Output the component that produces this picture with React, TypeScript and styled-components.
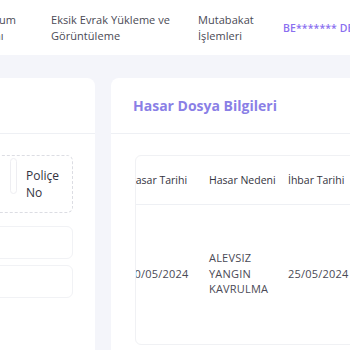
import React from "react";
import styled, { createGlobalStyle } from "styled-components";

const Global = createGlobalStyle`
  html, body { margin: 0; padding: 0; background: #f4f5fa; }
  body { font-family: "Open Sans", "Noto Sans", sans-serif; overflow: hidden; width: 350px; height: 350px; }
`;

const Page = styled.div`
  width: 350px;
  height: 350px;
  overflow: hidden;
  background: #f4f5fa;
`;

const TopBar = styled.header`
  height: 55px;
  background: #ffffff;
  display: flex;
  align-items: center;
  margin-left: -55px;
  white-space: nowrap;
`;

const NavItem = styled.div<{ $w: number; $active?: boolean }>`
  flex: 0 0 ${(p) => p.$w}px;
  font-size: ${(p) => (p.$active ? "10.5px" : "11px")};
  line-height: 16px;
  font-weight: ${(p) => (p.$active ? 600 : 400)};
  color: ${(p) => (p.$active ? "#8a6ff0" : "#4a4a55")};
  letter-spacing: ${(p) => (p.$active ? "0.1px" : "0.05px")};
`;

const Content = styled.div`
  display: flex;
  gap: 16px;
  padding-top: 23px;
  margin-left: -120px;
`;

const Card = styled.section<{ $w: number }>`
  flex: 0 0 ${(p) => p.$w}px;
  height: 300px;
  background: #ffffff;
  border-radius: 8px;
  display: flex;
  flex-direction: column;
`;

const CardHead = styled.div`
  height: 56px;
  border-bottom: 1px solid #eef0f4;
  display: flex;
  align-items: center;
  padding-left: 22px;
  box-sizing: border-box;
`;

const Title = styled.h2`
  margin: 0;
  font-size: 14px;
  font-weight: 700;
  color: #8a7fe6;
  letter-spacing: 0;
`;

const LeftBody = styled.div`
  padding: 21px 22px 0 96px;
  display: flex;
  flex-direction: column;
  gap: 13px;
`;

const DashedBox = styled.div`
  height: 58px;
  border: 1px dashed #dcdde3;
  border-radius: 6px;
  display: flex;
  align-items: center;
  padding-left: 33px;
  gap: 9px;
  box-sizing: border-box;
`;

const Handle = styled.div`
  width: 7px;
  height: 36px;
  border: 1px solid #eeeef2;
  border-radius: 4px;
  align-self: flex-start;
  margin-top: 2px;
  box-sizing: border-box;
`;

const HeadLabel = styled.div`
  font-size: 12px;
  line-height: 17px;
  color: #333340;
  font-weight: 500;
`;

const Inputs = styled.div`
  display: flex;
  flex-direction: column;
  gap: 6px;
`;

const InputBox = styled.div`
  height: 33px;
  border: 1px solid #f1f2f5;
  border-radius: 6px;
  box-sizing: border-box;
`;

const RightBody = styled.div`
  padding: 21px 0 0 24px;
`;

const TableScroll = styled.div`
  border: 1px solid #f0f1f4;
  border-radius: 6px;
  overflow: hidden;
  height: 190px;
  box-sizing: border-box;
`;

const Table = styled.table`
  border-collapse: collapse;
  margin-left: -98px;
  width: 340px;
  white-space: nowrap;
  table-layout: fixed;
`;

const Th = styled.th<{ $w: number }>`
  width: ${(p) => p.$w}px;
  height: 48px;
  text-align: left;
  padding: 0 10px;
  font-size: 10.5px;
  font-weight: 500;
  color: #333340;
  border-bottom: 1px solid #eef0f4;
  box-sizing: border-box;
  overflow: hidden;
`;

const Td = styled.td`
  height: 138px;
  padding: 0 10px;
  font-size: 11px;
  line-height: 15.5px;
  color: #4a4a55;
  vertical-align: middle;
  letter-spacing: 0.2px;
  overflow: hidden;
`;

export default function App() {
  return (
    <Page>
      <Global />
      <TopBar>
        <NavItem $w={106}>
          Dosya Durum
          <br />
          Sorgu Alanı
        </NavItem>
        <NavItem $w={147}>
          Eksik Evrak Yükleme ve
          <br />
          Görüntüleme
        </NavItem>
        <NavItem $w={85}>
          Mutabakat
          <br />
          İşlemleri
        </NavItem>
        <NavItem $w={120} $active>
          BE******* DEMİR
        </NavItem>
      </TopBar>
      <Content>
        <Card $w={215}>
          <CardHead />
          <LeftBody>
            <DashedBox>
              <Handle />
              <HeadLabel>
                Poliçe
                <br />
                No
              </HeadLabel>
            </DashedBox>
            <Inputs>
              <InputBox />
              <InputBox />
            </Inputs>
          </LeftBody>
        </Card>
        <Card $w={300}>
          <CardHead>
            <Title>Hasar Dosya Bilgileri</Title>
          </CardHead>
          <RightBody>
            <TableScroll>
              <Table>
                <thead>
                  <tr>
                    <Th $w={80}>Dosya No</Th>
                    <Th $w={81}>Hasar Tarihi</Th>
                    <Th $w={79}>Hasar Nedeni</Th>
                    <Th $w={100}>İhbar Tarihi</Th>
                  </tr>
                </thead>
                <tbody>
                  <tr>
                    <Td>2024-118</Td>
                    <Td>10/05/2024</Td>
                    <Td>
                      ALEVSIZ
                      <br />
                      YANGIN
                      <br />
                      KAVRULMA
                    </Td>
                    <Td>25/05/2024</Td>
                  </tr>
                </tbody>
              </Table>
            </TableScroll>
          </RightBody>
        </Card>
      </Content>
    </Page>
  );
}
